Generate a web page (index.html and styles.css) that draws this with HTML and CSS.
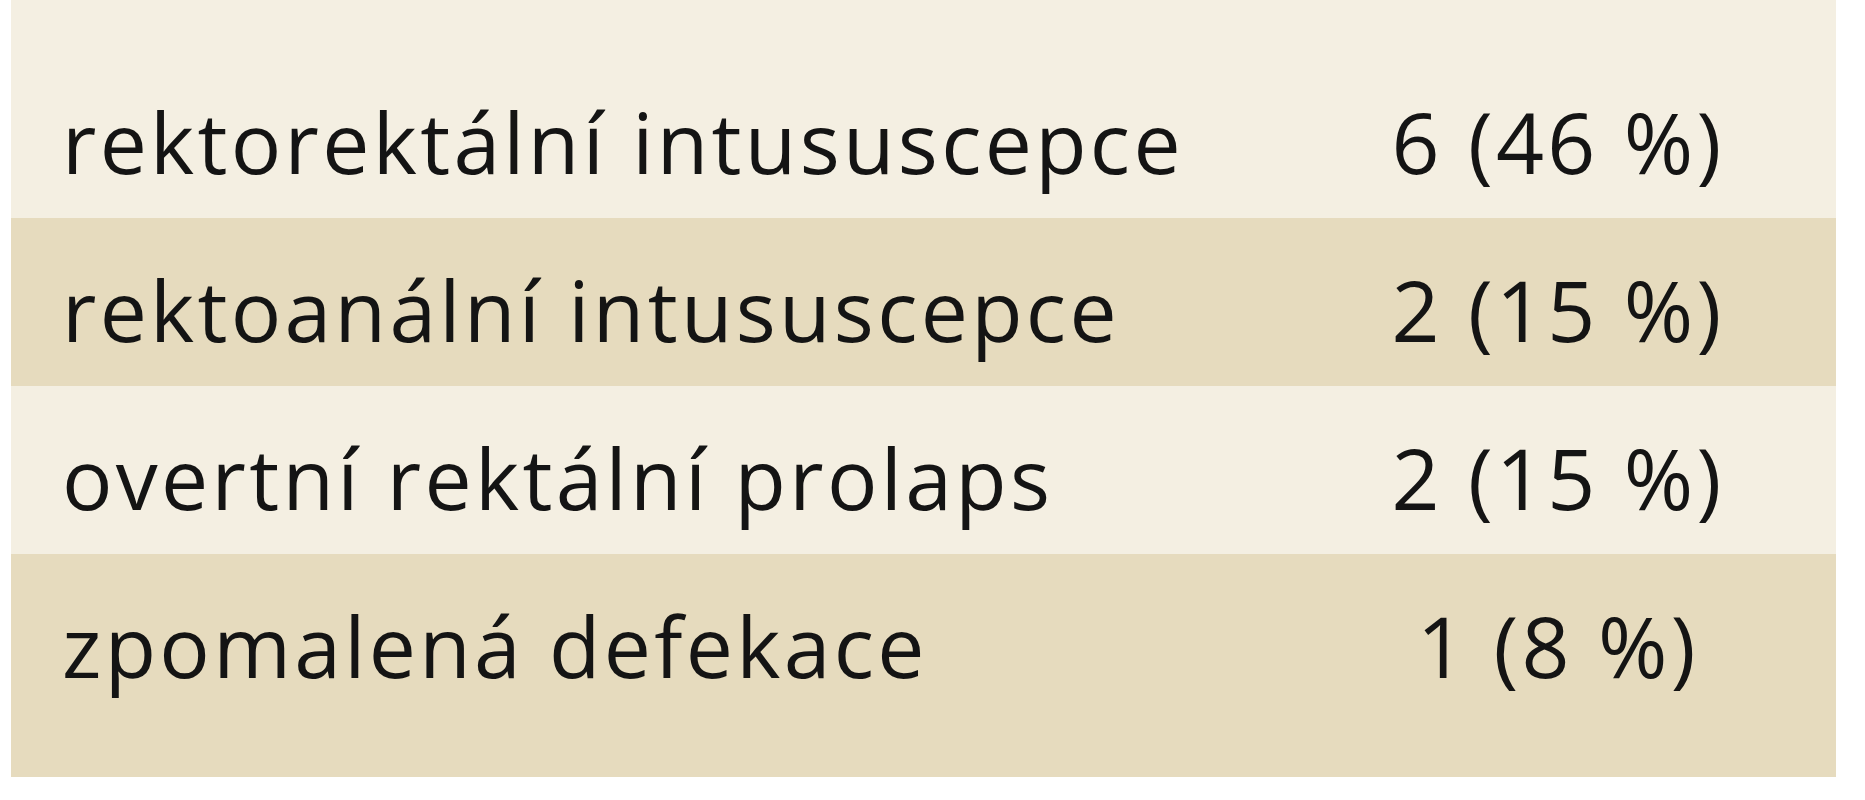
FILE: index.html
```html
<!DOCTYPE html>
<html lang="cs">
<head>
<meta charset="utf-8">
<title>Tabulka</title>
<link rel="stylesheet" href="styles.css">
</head>
<body>
<div class="table">
  <div class="spacer light"></div>
  <div class="row light"><div class="label">rektorektální intususcepce</div><div class="value">6 (46 %)</div></div>
  <div class="row dark"><div class="label">rektoanální intususcepce</div><div class="value">2 (15 %)</div></div>
  <div class="row light"><div class="label">overtní rektální prolaps</div><div class="value">2 (15 %)</div></div>
  <div class="row dark"><div class="label">zpomalená defekace</div><div class="value">1 (8 %)</div></div>
  <div class="spacer foot dark"></div>
</div>
</body>
</html>
```
FILE: styles.css
```css
html, body {
  margin: 0;
  padding: 0;
  background: #ffffff;
}
.table {
  margin-left: 11px;
  width: 1825px;
  display: flex;
  flex-direction: column;
  font-family: "Open Sans", "Liberation Sans", sans-serif;
  font-size: 84px;
  line-height: 80px;
  letter-spacing: 3.3px;
  color: #141414;
}
.spacer {
  height: 50px;
}
.spacer.foot {
  height: 55px;
}
.light {
  background: #f4efe2;
}
.dark {
  background: #e6dbbe;
}
.row {
  display: grid;
  grid-template-columns: 1269px 1fr;
  padding: 52px 0 36px 0;
}
.label {
  padding-left: 51px;
  white-space: nowrap;
}
.value {
  text-align: center;
  white-space: nowrap;
}
```
